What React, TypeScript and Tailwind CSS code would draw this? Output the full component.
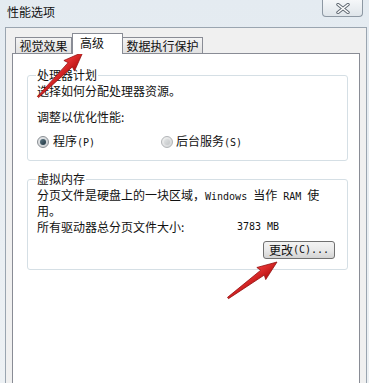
import React from "react";

function M({ children }: { children: React.ReactNode }) {
  // SimSun-style half-width latin
  return <span className="font-['DejaVu_Sans_Mono',monospace] text-[10px] whitespace-pre">{children}</span>;
}

function Radio({ checked }: { checked?: boolean }) {
  return (
    <span
      className={
        "flex h-[12px] w-[12px] items-center justify-center rounded-full border " +
        (checked
          ? "border-[#8a8f94] bg-gradient-to-br from-[#e6e8ea] to-[#c9cdd0]"
          : "border-[#b1b4b7] bg-gradient-to-br from-[#f2f2f2] to-[#d2d4d6]")
      }
    >
      {checked ? (
        <span className="h-[6px] w-[6px] rounded-full bg-gradient-to-br from-[#5f7a86] to-[#1f3440]" />
      ) : (
        <span className="h-[6px] w-[6px] rounded-full bg-gradient-to-br from-[#e2e4e5] to-[#c3c6c8]" />
      )}
    </span>
  );
}

function Arrow({ x, y, len, angle }: { x: number; y: number; len: number; angle: number }) {
  const b = len - 18;
  const pts = `0,-0.8 ${b},-3 ${b - 1.5},-7.5 ${len},0 ${b - 1.5},7.5 ${b},3 0,0.8`;
  return (
    <g transform={`translate(${x} ${y}) rotate(${angle})`}>
      <polygon points={pts} fill="url(#redg)" stroke="#8e0c0c" strokeWidth="0.7" strokeLinejoin="round" />
    </g>
  );
}

export default function App() {
  return (
    <div className="relative flex h-[383px] w-[369px] flex-col overflow-hidden bg-gradient-to-b from-[#e4ebf1] to-[#edf1f4] font-['Noto_Sans_CJK_SC',sans-serif] text-[12px] text-[#111]">
      {/* title bar */}
      <div className="flex h-[27px] shrink-0 justify-between">
        <span className="pl-[7px] pt-[5px] leading-[14px]">性能选项</span>
        <button className="mr-[6px] flex h-[17px] w-[41px] items-center justify-center rounded-b-[4px] border border-t-0 border-[#8d98a3] bg-gradient-to-b from-[#f5f7f9] to-[#dfe5ea]">
          <svg width="14" height="11" viewBox="0 0 14 11">
            <path d="M2 1.5 L12 9.5 M12 1.5 L2 9.5" stroke="#5d6670" strokeWidth="3.4" strokeLinecap="round" />
            <path d="M2 1.5 L12 9.5 M12 1.5 L2 9.5" stroke="#ffffff" strokeWidth="1.6" strokeLinecap="round" />
          </svg>
        </button>
      </div>

      {/* window body */}
      <div className="ml-[5px] mr-[2px] flex flex-1 flex-col border border-b-0 border-[#9aa5b0] bg-[#f0f0f0] px-[6px] pt-[5px]">
        {/* tabs */}
        <div className="relative z-10 -mb-px flex items-end pl-[3px]">
          <div className="mb-px flex h-[16px] w-[57px] justify-center border border-b-0 border-[#898c95] bg-gradient-to-b from-[#f4f4f4] to-[#e1e1e1] pt-px leading-[14px]">
            视觉效果
          </div>
          <div className="flex h-[21px] w-[51px] border border-b-0 border-[#898c95] bg-white pl-[7px] pt-[2px] leading-[14px]">
            高级
          </div>
          <div className="mb-px flex h-[16px] w-[80px] justify-center border border-b-0 border-l-0 border-[#898c95] bg-gradient-to-b from-[#f4f4f4] to-[#e1e1e1] pt-px leading-[14px]">
            数据执行保护
          </div>
        </div>

        {/* tab panel */}
        <div className="flex flex-1 flex-col border border-b-0 border-[#898c95] bg-white pl-[14px]">
          <fieldset className="mt-[14px] w-[321px] rounded-[3px] border border-[#d5dfe5] pb-[11px] pl-[9px] pr-[12px]">
            <legend className="-ml-[1px] px-[1px] leading-[14px]">处理器计划</legend>
            <div className="mt-[2px] leading-[14px]">选择如何分配处理器资源。</div>
            <div className="mt-[12px] leading-[14px]">调整以优化性能:</div>
            <div className="mt-[11px] flex h-[14px] items-center leading-[14px]">
              <div className="flex w-[124px] items-center gap-[4px]">
                <Radio checked />
                <span>
                  程序<M>(P)</M>
                </span>
              </div>
              <div className="flex items-center gap-[3px]">
                <Radio />
                <span>
                  后台服务<M>(S)</M>
                </span>
              </div>
            </div>
          </fieldset>

          <fieldset className="mt-[11px] w-[321px] rounded-[3px] border border-[#d5dfe5] pb-[10px] pl-[9px] pr-[12px]">
            <legend className="-ml-[1px] px-[1px] leading-[14px]">虚拟内存</legend>
            <div className="mt-[2px] leading-[14px]">
              <div>
                分页文件是硬盘上的一块区域，<M>Windows </M>当作<M> RAM </M>使
              </div>
              <div>用。</div>
            </div>
            <div className="mt-[2px] flex leading-[14px]">
              <span className="w-[200px]">所有驱动器总分页文件大小:</span>
              <M>3783 MB</M>
            </div>
            <div className="mt-[7px] flex justify-end">
              <button className="flex h-[18px] w-[72px] items-center justify-center rounded-[3px] border border-[#707070] bg-gradient-to-b from-[#f3f3f3] via-[#e9e9e9] to-[#d3d3d3] leading-[14px]">
                更改<M>(C)...</M>
              </button>
            </div>
          </fieldset>
        </div>
      </div>

      {/* annotation arrows */}
      <svg className="pointer-events-none absolute left-0 top-0" width="369" height="383">
        <defs>
          <linearGradient id="redg" x1="0" y1="0" x2="0" y2="1">
            <stop offset="0" stopColor="#ee3a3a" />
            <stop offset="1" stopColor="#b81010" />
          </linearGradient>
        </defs>
        <Arrow x={38} y={97} len={63.6} angle={-45} />
        <Arrow x={228} y={298} len={60.8} angle={-36.3} />
      </svg>
    </div>
  );
}
